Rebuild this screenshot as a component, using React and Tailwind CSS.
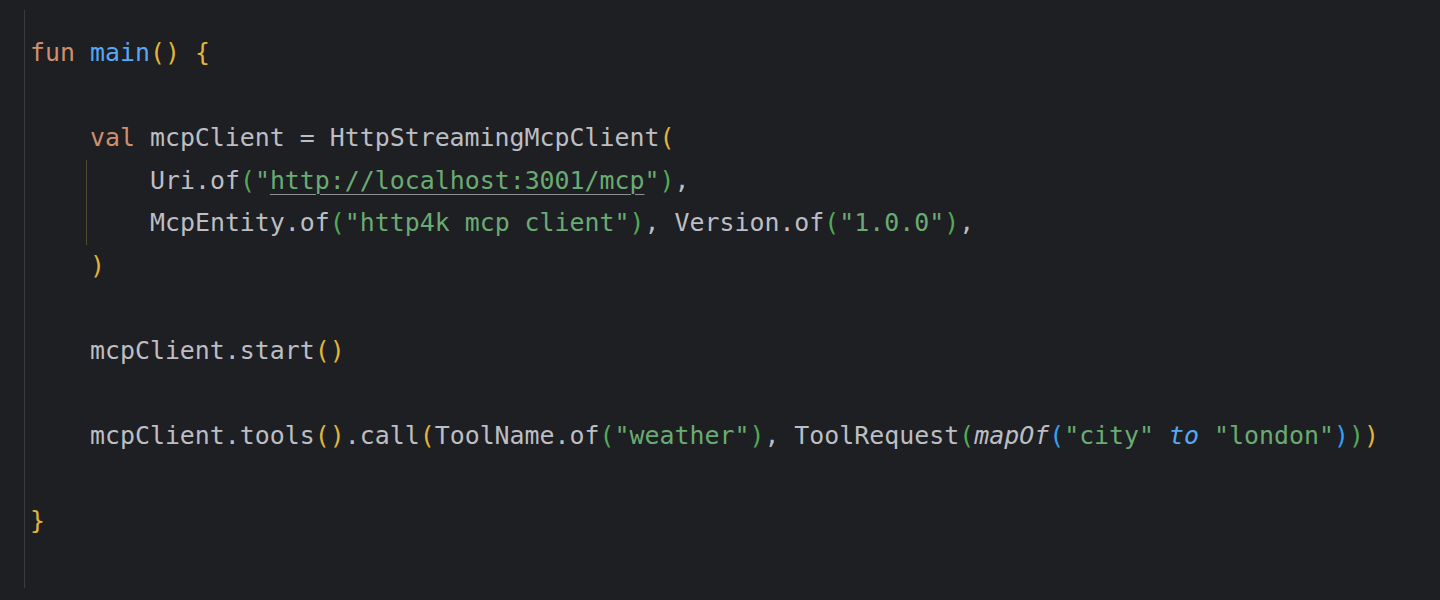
import React from "react";

const K = ({ children }) => <span className="text-[#cf8e6d]">{children}</span>;
const F = ({ children }) => <span className="text-[#56a8f5]">{children}</span>;
const Y = ({ children }) => <span className="text-[#e0b53b]">{children}</span>;
const G = ({ children }) => <span className="text-[#54a857]">{children}</span>;
const B = ({ children }) => <span className="text-[#359ff4]">{children}</span>;
const S = ({ children }) => <span className="text-[#6aab73]">{children}</span>;

const Line = ({ children }) => (
  <div className="h-[42.5px] leading-[42.5px] whitespace-pre">{children || " "}</div>
);

export default function App() {
  return (
    <div className="w-full h-[600px] bg-[#1e1f22] flex overflow-hidden">
      <div className="ml-[24px] mt-[10px] h-[578px] border-l border-[#393b40] pl-[5px] pt-[22px]">
        <div
          className="text-[24.9px] text-[#bcbec4]"
          style={{ fontFamily: '"DejaVu Sans Mono", "Liberation Mono", monospace' }}
        >
          <Line>
            <K>fun</K> <F>main</F>
            <Y>()</Y> <Y>{"{"}</Y>
          </Line>
          <Line />
          <Line>
            {"    "}
            <K>val</K> mcpClient = HttpStreamingMcpClient<Y>(</Y>
          </Line>
          <div className="flex">
            <div className="w-[56px] shrink-0" />
            <div className="border-l border-[#514a32] pl-[3px]">
              <Line>
                {"    "}Uri.of<G>(</G>
                <S>
                  "
                  <span className="underline decoration-[#8d8f94] underline-offset-[5px] decoration-1">
                    http://localhost:3001/mcp
                  </span>
                  "
                </S>
                <G>)</G>,
              </Line>
              <Line>
                {"    "}McpEntity.of<G>(</G>
                <S>"http4k mcp client"</S>
                <G>)</G>, Version.of<G>(</G>
                <S>"1.0.0"</S>
                <G>)</G>,
              </Line>
            </div>
          </div>
          <Line>
            {"    "}
            <Y>)</Y>
          </Line>
          <Line />
          <Line>
            {"    "}mcpClient.start<Y>()</Y>
          </Line>
          <Line />
          <Line>
            {"    "}mcpClient.tools<Y>()</Y>.call<Y>(</Y>ToolName.of<G>(</G>
            <S>"weather"</S>
            <G>)</G>, ToolRequest<G>(</G>
            <span className="italic">mapOf</span>
            <B>(</B>
            <S>"city"</S> <span className="italic text-[#56a8f5]">to</span> <S>"london"</S>
            <B>)</B>
            <G>)</G>
            <Y>)</Y>
          </Line>
          <Line />
          <Line>
            <Y>{"}"}</Y>
          </Line>
        </div>
      </div>
    </div>
  );
}
